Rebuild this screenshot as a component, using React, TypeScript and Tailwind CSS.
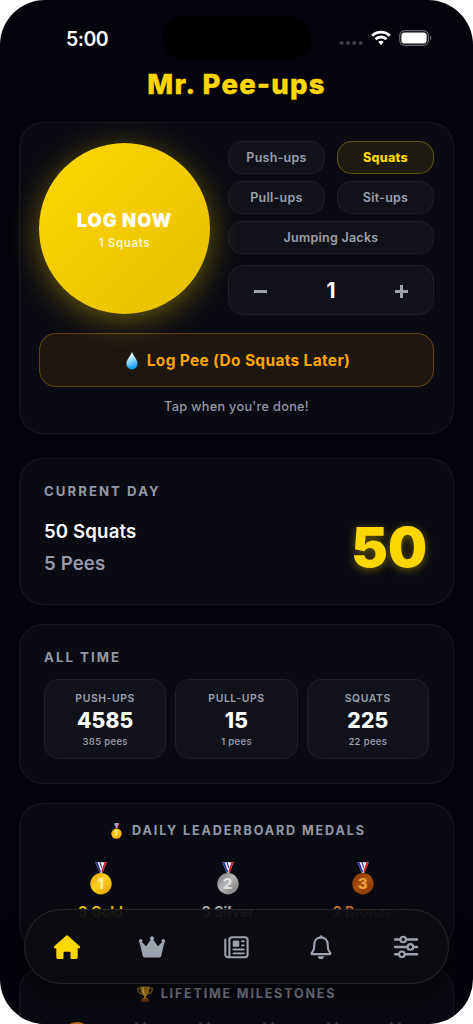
import { useState } from "react";
import clsx from "clsx";

const EXERCISES = ["Push-ups", "Squats", "Pull-ups", "Sit-ups", "Jumping Jacks"];

const ALL_TIME = [
  { label: "PUSH-UPS", total: 4585, pees: 385 },
  { label: "PULL-UPS", total: 15, pees: 1 },
  { label: "SQUATS", total: 225, pees: 22 },
];

const MEDALS = [
  { place: 1, label: "3 Gold", color: "text-[#ffd700]" },
  { place: 2, label: "3 Silver", color: "text-[#c0c0c0]" },
  { place: 3, label: "2 Bronze", color: "text-[#cd7f32]" },
];

const MEDAL_COLORS = [
  { light: "#ffd21a", dark: "#e09600", digit: "#fff0a0" },
  { light: "#b4b4b4", dark: "#707070", digit: "#dedede" },
  { light: "#a9500f", dark: "#7c3303", digit: "#f09a3c" },
];

function Medal({ place, className }: { place: number; className?: string }) {
  const c = MEDAL_COLORS[place - 1];
  const id = `medal-${place}`;
  return (
    <svg viewBox="0 0 22 33" className={className}>
      <defs>
        <linearGradient id={id} x1="0" y1="0" x2="1" y2="1">
          <stop offset="0" stopColor={c.dark} />
          <stop offset="0.45" stopColor={c.light} />
          <stop offset="1" stopColor={c.dark} />
        </linearGradient>
      </defs>
      <path d="M5.4 0.3h11.2l-4.2 10.5h-2.6z" fill="#f4f4fb" />
      <path d="M5.4 0.3h2.200l3.4 9.2-1.200 1.3z" fill="#26309c" />
      <path d="M16.6 0.3h-2.2l-3 8.6 1.2 1.9z" fill="#d3202f" />
      <path d="M9.5 0.3h1.2l1.300 4.600-.7 1.600z" fill="#26309c" />
      <circle cx="11" cy="21.8" r="10.7" fill={`url(#${id})`} />
      <circle cx="11" cy="21.8" r="9.2" fill="none" stroke={c.light} strokeOpacity="0.5" strokeWidth="0.7" />
      <text x="10.6" y="27.1" textAnchor="middle" fontFamily="Inter, sans-serif" fontSize="15" fontWeight="800" fill={c.digit}>
        {place}
      </text>
    </svg>
  );
}

function Droplet() {
  return (
    <svg viewBox="0 0 12 19" className="h-[19px] w-3">
      <defs>
        <linearGradient id="drop" x1="0.3" y1="0" x2="0.6" y2="1">
          <stop offset="0.2" stopColor="#e6faff" />
          <stop offset="0.55" stopColor="#7fd4f8" />
          <stop offset="1" stopColor="#0791e8" />
        </linearGradient>
      </defs>
      <path d="M6 .3C5.6 4 .4 8.400.4 12.700a5.600 5.700 0 0 0 11.200 0C11.600 8.400 6.400 4 6 .3z" fill="url(#drop)" />
      <path d="M1.100 13.600a5 4.700 0 0 0 9.800 0c-.8 2-2.500 2.700-4.900 2.700s-4.200-.8-4.900-2.700z" fill="#07a5f5" />
    </svg>
  );
}

function Trophy() {
  return (
    <svg viewBox="0 0 16 16" className="h-4 w-4">
      <path d="M3.500 2.200H.7c0 3.600 1.500 5.500 4.500 5.800M12.500 2.200h2.800c0 3.600-1.500 5.500-4.500 5.800" fill="none" stroke="#a97716" strokeWidth="1.200" />
      <path d="M3.200.6h9.600c0 5-1.300 8-3.800 9.300v2.500H7V9.900C4.500 8.600 3.200 5.600 3.200.6z" fill="#c38c1b" />
      <path d="M5 1.200h2c0 3.300.3 6 .9 8C6 7.800 5 5 5 1.200z" fill="#f0c85a" />
      <path d="M5.600 12h4.800l.8 1.600H4.800z" fill="#a86a12" />
      <path d="M4 13.300h8v2.400H4z" fill="#6e3513" />
    </svg>
  );
}

function StatusBar() {
  return (
    <div className="relative flex h-[62px] shrink-0 items-start justify-between pl-[66px] pr-[41px] pt-[16px]">
      <span className="mt-[9px] text-[19.500px] font-semibold leading-7 tracking-[-0.500px] text-white">5:00</span>
      <div className="absolute left-[162px] top-4 h-11 w-[149px] rounded-full bg-black" />
      <div className="mt-[13px] flex items-center">
        <svg viewBox="0 0 24 18" className="mr-[8px] h-[18px] w-6" fill="#3d3d43">
          <circle cx="2.500" cy="14" r="2.100" />
          <circle cx="8.900" cy="14" r="2.100" />
          <circle cx="15.300" cy="14" r="2.100" />
          <circle cx="21.700" cy="14" r="2.100" />
        </svg>
        <svg viewBox="0 0 20 16" className="mr-[8px] h-4 w-5" fill="none" stroke="#fff" strokeWidth="2.900">
          <path d="M1.200 5.700a12.500 12.500 0 0 1 17.600 0" />
          <path d="M4.500 9.200a7.800 7.800 0 0 1 11 0" />
          <path d="M7.300 12.100a3.900 3.900 0 0 1 5.400 0L10 15z" fill="#fff" stroke="none" />
        </svg>
        <svg viewBox="0 0 33 16" className="h-4 w-[33px]">
          <rect x="0.700" y="0.700" width="28.600" height="14.600" rx="5" fill="none" stroke="#69696e" strokeWidth="1.300" />
          <rect x="2.400" y="2.400" width="25.200" height="11.200" rx="3.400" fill="#fff" />
          <path d="M31 5.500c1.800.8 1.800 4.200 0 5z" fill="#69696e" />
        </svg>
      </div>
    </div>
  );
}

const card = "shrink-0 rounded-[24px] border border-white/[0.06] bg-[#0a0b12]";
const pill = "flex h-[33px] items-center justify-center rounded-[15px] border pt-px text-[12.500px] tracking-[0.250px]";
const heading = "text-[13.200px] font-bold leading-5 tracking-[2.050px] text-[#9499a6]";

export default function App() {
  const [exercise, setExercise] = useState("Squats");
  const [count, setCount] = useState(1);

  return (
    <div className="h-[1024px] w-[473px] bg-white font-['Inter',sans-serif]">
      <div className="relative flex h-full flex-col overflow-hidden rounded-[45px] bg-[#03030b]">
        <StatusBar />
        <h1 className="h-[60px] shrink-0 pt-[4px] text-center text-[27.500px] font-extrabold leading-9 tracking-[1.250px] text-[#ffd700] [-webkit-text-stroke:0.4px_#ffd700]">
          Mr. Pee-ups
        </h1>

        <main className="flex flex-col px-[19px]">
          {/* Logger */}
          <section className={clsx(card, "h-[312px] px-[19px] pt-[18px]")}>
            <div className="flex gap-[18px]">
              <button className="mt-[2px] flex h-[171px] w-[171px] shrink-0 flex-col items-center justify-center rounded-full bg-linear-to-br from-[#ffd700] to-[#e6bf00] pt-[6px] shadow-[0_6px_30px_rgba(255,215,0,0.38)]">
                <span className="text-[18.300px] font-black leading-[23px] tracking-[1px] text-white">LOG NOW</span>
                <span className="text-[11.400px] font-semibold leading-[23px] tracking-[0.700px] text-white/80">{count} {exercise}</span>
              </button>
              <div className="w-[206px]">
                <div className="grid grid-cols-2 gap-x-3 gap-y-[7px]">
                  {EXERCISES.map((name) => (
                    <button
                      key={name}
                      onClick={() => setExercise(name)}
                      className={clsx(
                        pill,
                        name === "Jumping Jacks" && "col-span-2",
                        name === exercise
                          ? "border-[#ffd700]/30 bg-[#ffd700]/[0.08] font-extrabold text-[#ffd700]"
                          : "border-white/[0.06] bg-white/[0.03] font-semibold text-[#9ca0ab]"
                      )}
                    >
                      {name}
                    </button>
                  ))}
                </div>
                <div className="mt-[11px] flex h-[50px] items-center justify-between rounded-[16px] border border-white/[0.06] bg-white/[0.03] px-[24px] text-[#9ca3af]">
                  <button onClick={() => setCount(Math.max(1, count - 1))} aria-label="Less">
                    <svg viewBox="0 0 15 15" className="mt-[3px] h-[15px] w-[15px]" stroke="currentColor" strokeWidth="3"><path d="M1 7.500h13" /></svg>
                  </button>
                  <span className="pt-[2px] text-[21px] font-bold text-white">{count}</span>
                  <button onClick={() => setCount(count + 1)} aria-label="More">
                    <svg viewBox="0 0 15 15" className="mt-[3px] h-[15px] w-[15px]" stroke="currentColor" strokeWidth="3"><path d="M1 7.500h13M7.500 1v13" /></svg>
                  </button>
                </div>
              </div>
            </div>
            <button className="mt-[18px] flex h-[54px] w-full items-center justify-center gap-[9px] rounded-[17px] border border-[#ffa500]/30 bg-[#ffa500]/[0.08] pl-[3px] pt-px text-[15.500px] font-bold tracking-[0.320px] text-[#ffa500]">
              <Droplet />
              Log Pee (Do Squats Later)
            </button>
            <p className="mt-[10px] text-center text-[12.700px] font-medium leading-5 tracking-[0.300px] text-[#9699a6]">Tap when you're done!</p>
          </section>

          {/* Today */}
          <section className={clsx(card, "mt-6 h-[147px] px-6 pt-[22px]")}>
            <h2 className={heading}>CURRENT DAY</h2>
            <div className="mt-[14px] flex items-center justify-between">
              <div className="text-[18.600px] font-semibold leading-8 tracking-[0.150px]">
                <p className="text-white">50 Squats</p>
                <p className="text-[#989ba8]">5 Pees</p>
              </div>
              <span className="pr-[2px] text-[55px] font-black leading-[64px] text-[#ffd700] [text-shadow:0_2px_9px_rgba(255,215,0,0.4)]">50</span>
            </div>
          </section>

          {/* All time */}
          <section className={clsx(card, "mt-[19px] h-[160px] px-6 pt-[22px]")}>
            <h2 className={heading}>ALL TIME</h2>
            <div className="mt-[12px] grid grid-cols-3 gap-[9px]">
              {ALL_TIME.map((s) => (
                <div key={s.label} className="flex h-20 flex-col items-center rounded-[15px] border border-white/[0.06] bg-white/[0.03] pt-[11px]">
                  <span className="text-[10.400px] font-semibold leading-4 tracking-[0.600px] text-[#9c9fac]">{s.label}</span>
                  <span className="text-[21px] font-extrabold leading-[27px] tracking-[0.150px] text-white">{s.total}</span>
                  <span className="text-[9.500px] font-medium leading-[15px] tracking-[0.350px] text-[#a0a3b0]">{s.pees} pees</span>
                </div>
              ))}
            </div>
          </section>

          {/* Medals */}
          <section className={clsx(card, "mt-[19px] h-[147px] px-[19px] pt-[17px]")}>
            <h2 className="flex items-center justify-center gap-[10px] pl-[4px] text-[12.600px] font-bold leading-5 tracking-[1.870px] text-[#9499a6]">
              <Medal place={1} className="h-4 w-[11px]" />
              DAILY LEADERBOARD MEDALS
            </h2>
            <div className="mt-[21px] flex justify-around pr-px">
              {MEDALS.map((m) => (
                <div key={m.place} className="flex flex-col items-center">
                  <Medal place={m.place} className="h-[33px] w-[22px]" />
                  <span className={clsx("mt-[7px] text-[14px] font-bold leading-5 tracking-[0.100px]", m.color)}>{m.label}</span>
                </div>
              ))}
            </div>
          </section>

          {/* Milestones */}
          <section className={clsx(card, "mt-[17px] h-[160px] px-[19px] pt-[16px]")}>
            <h2 className="flex items-center justify-center gap-2 text-[12.600px] font-bold leading-5 tracking-[1.800px] text-[#858995]">
              <Trophy />
              LIFETIME MILESTONES
            </h2>
            <div className="mt-[18px] flex justify-between px-[24px]">
              <div className="h-7 w-7 rounded-full bg-[#b86b18]" />
              {[0, 1, 2, 3, 4].map((i) => (
                <div key={i} className="flex h-7 w-7 justify-center gap-[5px]">
                  <span className="h-4 w-[3px] rounded-full bg-[#303036]" />
                  <span className="h-4 w-[3px] rounded-full bg-[#303036]" />
                </div>
              ))}
            </div>
          </section>
        </main>

        {/* Floating tab bar */}
        <nav className="absolute left-[24px] top-[909px] flex h-[75px] w-[425px] items-center justify-around rounded-full border border-white/10 bg-[#0d0c11]/95 text-[#9ca3af] shadow-[0_9px_28px_rgba(0,0,0,0.6)]">
          <svg viewBox="0 0 28 28" className="h-7 w-7" fill="#ffd700">
            <path d="M13 2.700a1.500 1.500 0 0 1 2 0l11.700 10.500c.9.900.5 2.100-.8 2.100H24.700V24.200c0 1.100-.8 1.900-1.900 1.900h-3.900c-.8 0-1.400-.5-1.400-1.300v-4.700c0-.8-.5-1.300-1.300-1.300h-4.400c-.8 0-1.300.5-1.300 1.300v4.700c0 .8-.6 1.300-1.400 1.300H5.200c-1.100 0-1.900-.8-1.900-1.900V15.300H2.100c-1.300 0-1.700-1.200-.8-2.100z" />
          </svg>
          <svg viewBox="0 0 28 28" className="h-7 w-7" fill="currentColor">
            <path d="M2.200 7.500l6 5.800L13 6h2l4.800 7.300 6-5.800.9.400-3.300 14.600c-.3 1.300-1 2-2.200 2H6.800c-1.200 0-1.900-.7-2.200-2L1.300 7.900z" />
            <circle cx="2.700" cy="8" r="1.900" />
            <circle cx="14" cy="5.200" r="2" />
            <circle cx="25.300" cy="8" r="1.900" />
          </svg>
          <svg viewBox="0 0 28 28" className="h-7 w-7" fill="none" stroke="currentColor" strokeWidth="2.100" strokeLinecap="round">
            <path d="M3.300 6.500v15a2.700 2.700 0 0 0 2.700 2.700M6 24.200h17a2.600 2.600 0 0 0 2.600-2.600V6.800A2.600 2.600 0 0 0 23 4.200H10a2.600 2.600 0 0 0-2.600 2.600v15.800a1.500 1.500 0 0 1-1.400 1.600" />
            <rect x="11.300" y="8.200" width="5.400" height="5" rx="0.500" fill="currentColor" strokeWidth="1.200" />
            <path d="M20 8.200h1.800M20 12.400h1.800M11.400 16.500h10.400M11.400 20.400h10.400" strokeWidth="1.900" />
          </svg>
          <svg viewBox="0 0 28 28" className="h-7 w-7" fill="none" stroke="currentColor" strokeWidth="2.100" strokeLinejoin="round">
            <path d="M14 4.500c-4.500 0-6.700 3.200-6.700 7.200 0 4.300-.7 5.900-2 7.400-.8.900-.9 1.700-.5 2h18.400c.4-.3.300-1.100-.5-2-1.300-1.500-2-3.100-2-7.400 0-4-2.200-7.200-6.700-7.200z" />
            <circle cx="14" cy="3.800" r="1.600" fill="currentColor" stroke="none" />
            <path d="M10.900 23.300h6.200a3.100 2.800 0 0 1-6.200 0z" fill="currentColor" stroke="none" />
          </svg>
          <svg viewBox="0 0 28 28" className="h-7 w-7" fill="none" stroke="currentColor" strokeWidth="2.500" strokeLinecap="round">
            <path d="M3.200 6.500h5M14.300 6.500h10.700M3.200 13.900h12M21.400 13.900h3.600M3.200 21.300h3.600M13 21.300h12" />
            <circle cx="11.200" cy="6.500" r="2.800" strokeWidth="2.100" />
            <circle cx="18.400" cy="13.900" r="2.800" strokeWidth="2.100" />
            <circle cx="9.900" cy="21.300" r="2.800" strokeWidth="2.100" />
          </svg>
        </nav>
      </div>
    </div>
  );
}
